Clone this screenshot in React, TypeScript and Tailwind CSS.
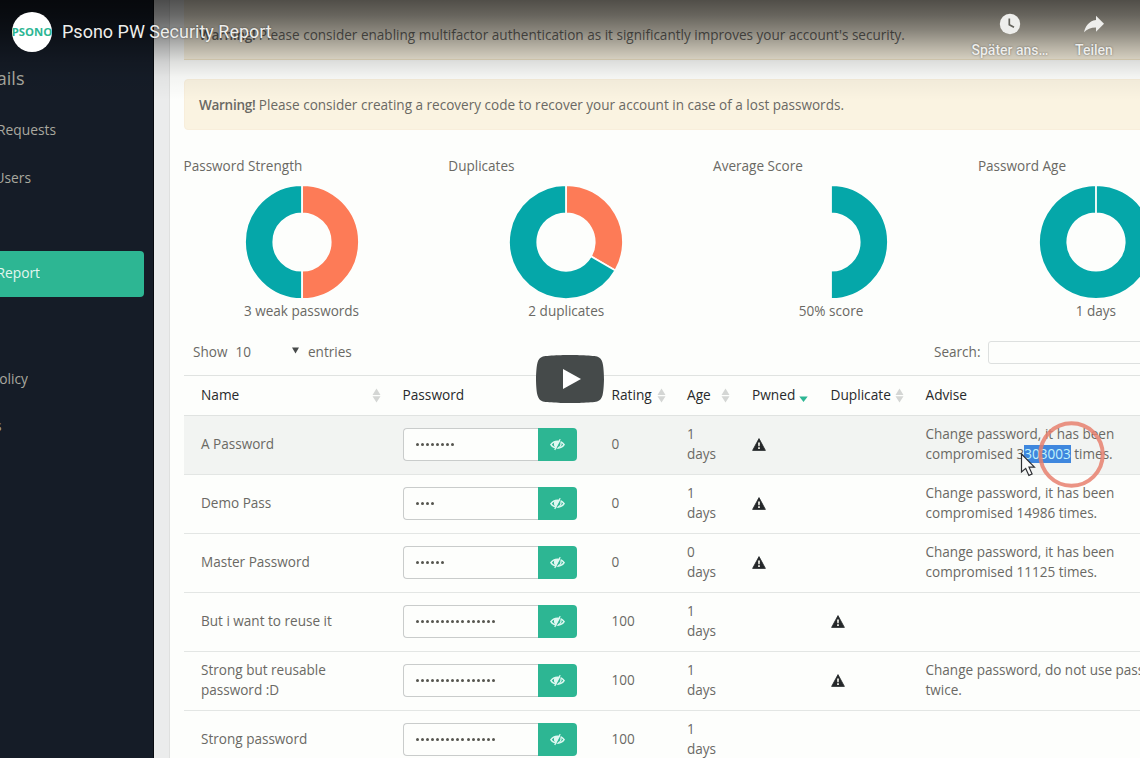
import React from "react";

const rows = [
  { name: "A Password", dots: 8, rating: "0", age: "1", pwned: true, dup: false },
  { name: "Demo Pass", dots: 4, rating: "0", age: "1", pwned: true, dup: false, count: "14986" },
  { name: "Master Password", dots: 6, rating: "0", age: "0", pwned: true, dup: false, count: "11125" },
  { name: "But i want to reuse it", dots: 16, rating: "100", age: "1", pwned: false, dup: true },
  { name: "Strong but reusable password :D", dots: 16, rating: "100", age: "1", pwned: false, dup: true, reuse: true },
  { name: "Strong password", dots: 16, rating: "100", age: "1", pwned: false, dup: false },
];

function arc(start: number, end: number) {
  const R = 57;
  const r = 28.7;
  const p = (rad: number, t: number) => {
    const a = (t * 2 - 0.5) * Math.PI;
    return `${60 + rad * Math.cos(a)} ${60 + rad * Math.sin(a)}`;
  };
  const large = end - start > 0.5 ? 1 : 0;
  return `M${p(R, start)}A${R} ${R} 0 ${large} 1 ${p(R, end)}L${p(r, end)}A${r} ${r} 0 ${large} 0 ${p(r, start)}Z`;
}

type Slice = { from: number; to: number; color: string };
const TEAL = "#05a7a9";
const CORAL = "#fd7b57";

function Chart({ title, label, slices }: { title: string; label: string; slices: Slice[] }) {
  return (
    <div className="w-[264.8px] shrink-0">
      <div className="h-[27.5px] leading-[25px]">{title}</div>
      <div className="flex w-[236px] flex-col items-center">
        <svg width="120" height="120" viewBox="0 0 120 120" className="block">
          {slices.map((s) => (
            <path key={s.from} d={arc(s.from, s.to)} fill={s.color} stroke="#fdfefc" strokeWidth="1.8" />
          ))}
        </svg>
        <div className="-mt-px leading-5">{label}</div>
      </div>
    </div>
  );
}

function Sort({ active = false }: { active?: boolean }) {
  return (
    <svg width="9" height="15" viewBox="0 0 9 15" className="shrink-0">
      {active ? (
        <path d="M0.3 8.5h8.4L4.5 14z" fill="#2db693" />
      ) : (
        <path d="M0.5 7L4.5 0.5 8.5 7zM0.5 8.2h8L4.5 14.5z" fill="#d4d6d4" />
      )}
    </svg>
  );
}

function EyeClosed() {
  return (
    <svg width="15" height="13" viewBox="0 0 15 13" fill="none" stroke="#dff8f1">
      <path d="M0.9 6.7C3.8 2.1 11.2 2.1 14.1 6.7C11.2 11.3 3.8 11.3 0.9 6.7Z" strokeWidth="1.5" />
      <path d="M4.2 4.2C3.3 7.3 4.4 9.2 6.4 9.8L9.9 3.4C7.8 2.8 5.4 2.8 4.2 4.2Z" fill="#dff8f1" stroke="none" />
      <path d="M10.9 4.5C11.4 6.8 10.3 8.8 8.2 9.6" strokeWidth="1.3" />
      <path d="M10.2 1.2L4.8 12" strokeWidth="1.4" />
      <path d="M11.3 1.7L5.9 12.3" stroke="#2db693" strokeWidth="0.7" />
    </svg>
  );
}

function Warn() {
  return (
    <svg width="14" height="13" viewBox="0 0 14 13">
      <path d="M7 0.6L13.4 12.4H0.6z" fill="#25282a" stroke="#25282a" strokeWidth="0.8" strokeLinejoin="round" />
      <path d="M5.9 4.4h2.2L7.8 8.2H6.2zM6 9.3h2v1.6H6z" fill="#d9d9d3" />
    </svg>
  );
}

function Side({ children, cls }: { children: string; cls: string }) {
  return (
    <div className={`flex items-center justify-end overflow-hidden whitespace-nowrap ${cls}`}>
      <span className="shrink-0">{children}</span>
    </div>
  );
}

export default function App() {
  return (
    <div className="relative flex h-[758px] w-[1140px] overflow-hidden bg-[#ebecec] font-['Open_Sans',sans-serif] text-[13.55px] text-[#6a6964]">
      <aside className="flex h-full w-[153.5px] shrink-0 flex-col border-r border-[#080b10] bg-[#151c27] text-[13.8px] text-[#a9a89f]">
        <Side cls="w-[24.5px] mt-[64px] h-[28px] text-[18px]">Details</Side>
        <Side cls="w-[56px] mt-[28.5px] h-[20px]">Requests</Side>
        <Side cls="w-[31px] mt-[27.5px] h-[20px]">Users</Side>
        <div className="mt-[63px] flex h-[46px] w-[143.5px] items-center rounded-r-[4px] bg-[#2db693] pb-[2px] text-[#e3f7ef]">
          <Side cls="w-[40px] h-[24px]">Report</Side>
        </div>
        <Side cls="w-[28px] mt-[72.5px] h-[20px]">Policy</Side>
        <Side cls="w-[1.5px] mt-[27px] h-[20px]">s</Side>
      </aside>

      <main className="ml-[15px] flex h-full w-[972px] shrink-0 flex-col border-l border-[#dfe0df] bg-[#fdfefc] pl-[14px]">
        <div className="flex h-[60px] shrink-0 items-center border-b border-[#efe3c6] bg-[#faf3e1] pl-[15.5px] pt-[11px]">
          <p><b className="font-semibold tracking-[-0.3px]">Warning!</b> Please consider enabling multifactor authentication as it significantly improves your account's security.</p>
        </div>
        <div className="mt-[19px] flex h-[51px] shrink-0 items-center rounded-l border border-[#f8eedb] bg-[#faf3e1] pl-[14.5px] pt-px">
          <p><b className="font-semibold tracking-[-0.3px]">Warning!</b> Please consider creating a recovery code to recover your account in case of a lost passwords.</p>
        </div>

        <div className="mt-[24px] flex h-[167px] shrink-0">
          <Chart title="Password Strength" label="3 weak passwords" slices={[{ from: 0, to: 0.5, color: CORAL }, { from: 0.5, to: 1, color: TEAL }]} />
          <Chart title="Duplicates" label="2 duplicates" slices={[{ from: 0, to: 0.3333, color: CORAL }, { from: 0.3333, to: 1, color: TEAL }]} />
          <Chart title="Average Score" label="50% score" slices={[{ from: 0, to: 0.5, color: TEAL }]} />
          <Chart title="Password Age" label="1 days" slices={[{ from: 0, to: 0.9999, color: TEAL }]} />
        </div>

        <div className="mt-[18px] flex h-[26px] shrink-0 items-center pl-[9.5px]">
          <span className="w-[42.5px] shrink-0">Show</span>
          <span className="w-[56px] shrink-0">10</span>
          <svg width="7" height="7" viewBox="0 0 7 7" className="mb-[3px] shrink-0"><path d="M0 0.5h7L3.5 6.5z" fill="#484b4b" /></svg>
          <span className="ml-[9.5px] w-[626px] shrink-0">entries</span>
          <span className="w-[53.5px] shrink-0">Search:</span>
          <div className="h-[23px] w-[180px] shrink-0 rounded-[3px] border border-[#dde0df] bg-[#fdfefc]" />
        </div>

        <div className="mt-[10px] w-[972px] shrink-0">
          <div className="grid h-[40.5px] grid-cols-[201.5px_209px_75.5px_65px_78.5px_95px_1fr] items-center border-y border-[#e0e3e1] pl-[17.5px] text-[13.7px] font-medium text-[#282a2b]">
            <div className="flex items-center justify-between pr-[22px]">Name<Sort /></div>
            <div>Password</div>
            <div className="flex items-center gap-[5px]">Rating<Sort /></div>
            <div className="flex items-center justify-between pr-[22px]">Age<Sort /></div>
            <div className="flex items-center gap-[4px]">Pwned<Sort active /></div>
            <div className="flex items-center gap-[4px]">Duplicate<Sort /></div>
            <div>Advise</div>
          </div>
          {rows.map((r, i) => (
            <div
              key={r.name}
              className={`grid h-[59px] grid-cols-[201.5px_209px_75.5px_65px_78.5px_95px_1fr] items-center border-b border-[#e3e6e4] pl-[17.5px] leading-[19.4px] ${i === 0 ? "bg-[#f2f4f2]" : ""}`}
            >
              <div className="w-[150px]">{r.name}</div>
              <div className="flex">
                <div className="flex h-[33px] w-[135.5px] items-center gap-[2.12px] rounded-l-[4px] border border-r-0 border-[#c9cccb] bg-[#fdfefc] pl-[12px]">
                  {Array.from({ length: r.dots }, (_, k) => (
                    <span key={k} className="size-[3px] rounded-full bg-[#55554f]" />
                  ))}
                </div>
                <div className="flex h-[33px] w-[38.5px] items-center justify-center rounded-r-[4px] bg-[#2db693]">
                  <EyeClosed />
                </div>
              </div>
              <div>{r.rating}</div>
              <div>{r.age}<br />days</div>
              <div>{r.pwned && <Warn />}</div>
              <div>{r.dup && <Warn />}</div>
              <div className="whitespace-nowrap">
                {i === 0 && (
                  <>Change password, it has been<br />compromised 3<span className="bg-[#3f87de] text-[#c3f3fb]">303003</span> times.</>
                )}
                {r.count && <>Change password, it has been<br />compromised {r.count} times.</>}
                {r.reuse && <>Change password, do not use passwords<br />twice.</>}
              </div>
            </div>
          ))}
        </div>
      </main>

      <svg className="absolute left-[1019px] top-[420px]" width="88" height="70" viewBox="0 0 88 70">
        <circle cx="52.5" cy="34.5" r="31.2" fill="none" stroke="#e8806f" strokeOpacity="0.85" strokeWidth="4" />
        <path d="M2.5 34v18l4.2-3.6 3.2 7 3.2-1.4-3.1-6.8h5.4z" fill="#fafafa" stroke="#2d2f33" strokeWidth="1.2" />
      </svg>

      <div className="absolute inset-x-0 top-0 flex h-[100px] items-start bg-[linear-gradient(to_bottom,rgba(0,0,0,0.68)_0%,rgba(0,0,0,0.59)_15%,rgba(0,0,0,0.46)_30%,rgba(0,0,0,0.27)_47%,rgba(0,0,0,0.12)_62%,rgba(0,0,0,0.04)_77%,transparent_100%)] font-['Roboto',sans-serif] text-[#eeeeec]">
        <div className="ml-3 mt-3 flex size-10 items-center justify-center overflow-hidden rounded-full bg-white">
          <span className="font-['Open_Sans',sans-serif] text-[11.3px] font-bold text-[#2db693]">PSONO</span>
        </div>
        <h1 className="ml-[10px] mt-[18px] text-[18px] leading-[27px] [text-shadow:0_0_2px_rgba(0,0,0,0.5)]">Psono PW Security Report</h1>
        <div className="ml-auto mt-[12px] flex w-[78px] flex-col items-center">
          <svg width="24" height="24" viewBox="0 0 24 24"><circle cx="12" cy="12" r="10.2" fill="#eeeeec" /><path d="M11.3 6.5v6.2l4.7 2.6" fill="none" stroke="#63625b" strokeWidth="1.7" /></svg>
          <span className="mt-[5px] whitespace-nowrap text-[14px] font-medium leading-[18px] [text-shadow:0_0_2px_rgba(0,0,0,0.5)]">Später ans…</span>
        </div>
        <div className="ml-[14px] mr-[15px] mt-[12px] flex w-[62px] flex-col items-center">
          <svg width="24" height="24" viewBox="0 0 24 24"><path d="M14 3.7L22 11.8 14 19.7V15.4C8.7 15.4 5 16.8 2 20.3 3.2 14.8 6.5 9.2 14 8.1z" fill="#eeeeec" /></svg>
          <span className="mt-[5px] text-[14px] font-medium leading-[18px] [text-shadow:0_0_2px_rgba(0,0,0,0.5)]">Teilen</span>
        </div>
      </div>

      <svg className="absolute left-[536px] top-[355px]" width="68" height="48" viewBox="0 0 68 48">
        <path d="M66.52 7.74C65.74 4.81 64.03 2.33 61.1 1.55 55.79.13 34 0 34 0S12.21.13 6.9 1.55C3.97 2.33 2.27 4.81 1.48 7.74.06 13.05 0 24 0 24s.06 10.95 1.48 16.26c.78 2.93 2.49 5.41 5.42 6.19C12.21 47.87 34 48 34 48s21.79-.13 27.1-1.55c2.93-.78 4.64-3.26 5.42-6.19C67.94 34.95 68 24 68 24s-.06-10.95-1.48-16.26z" fill="#454a4a" />
        <path d="M45 24L27 14v20z" fill="#fff" />
      </svg>
    </div>
  );
}
